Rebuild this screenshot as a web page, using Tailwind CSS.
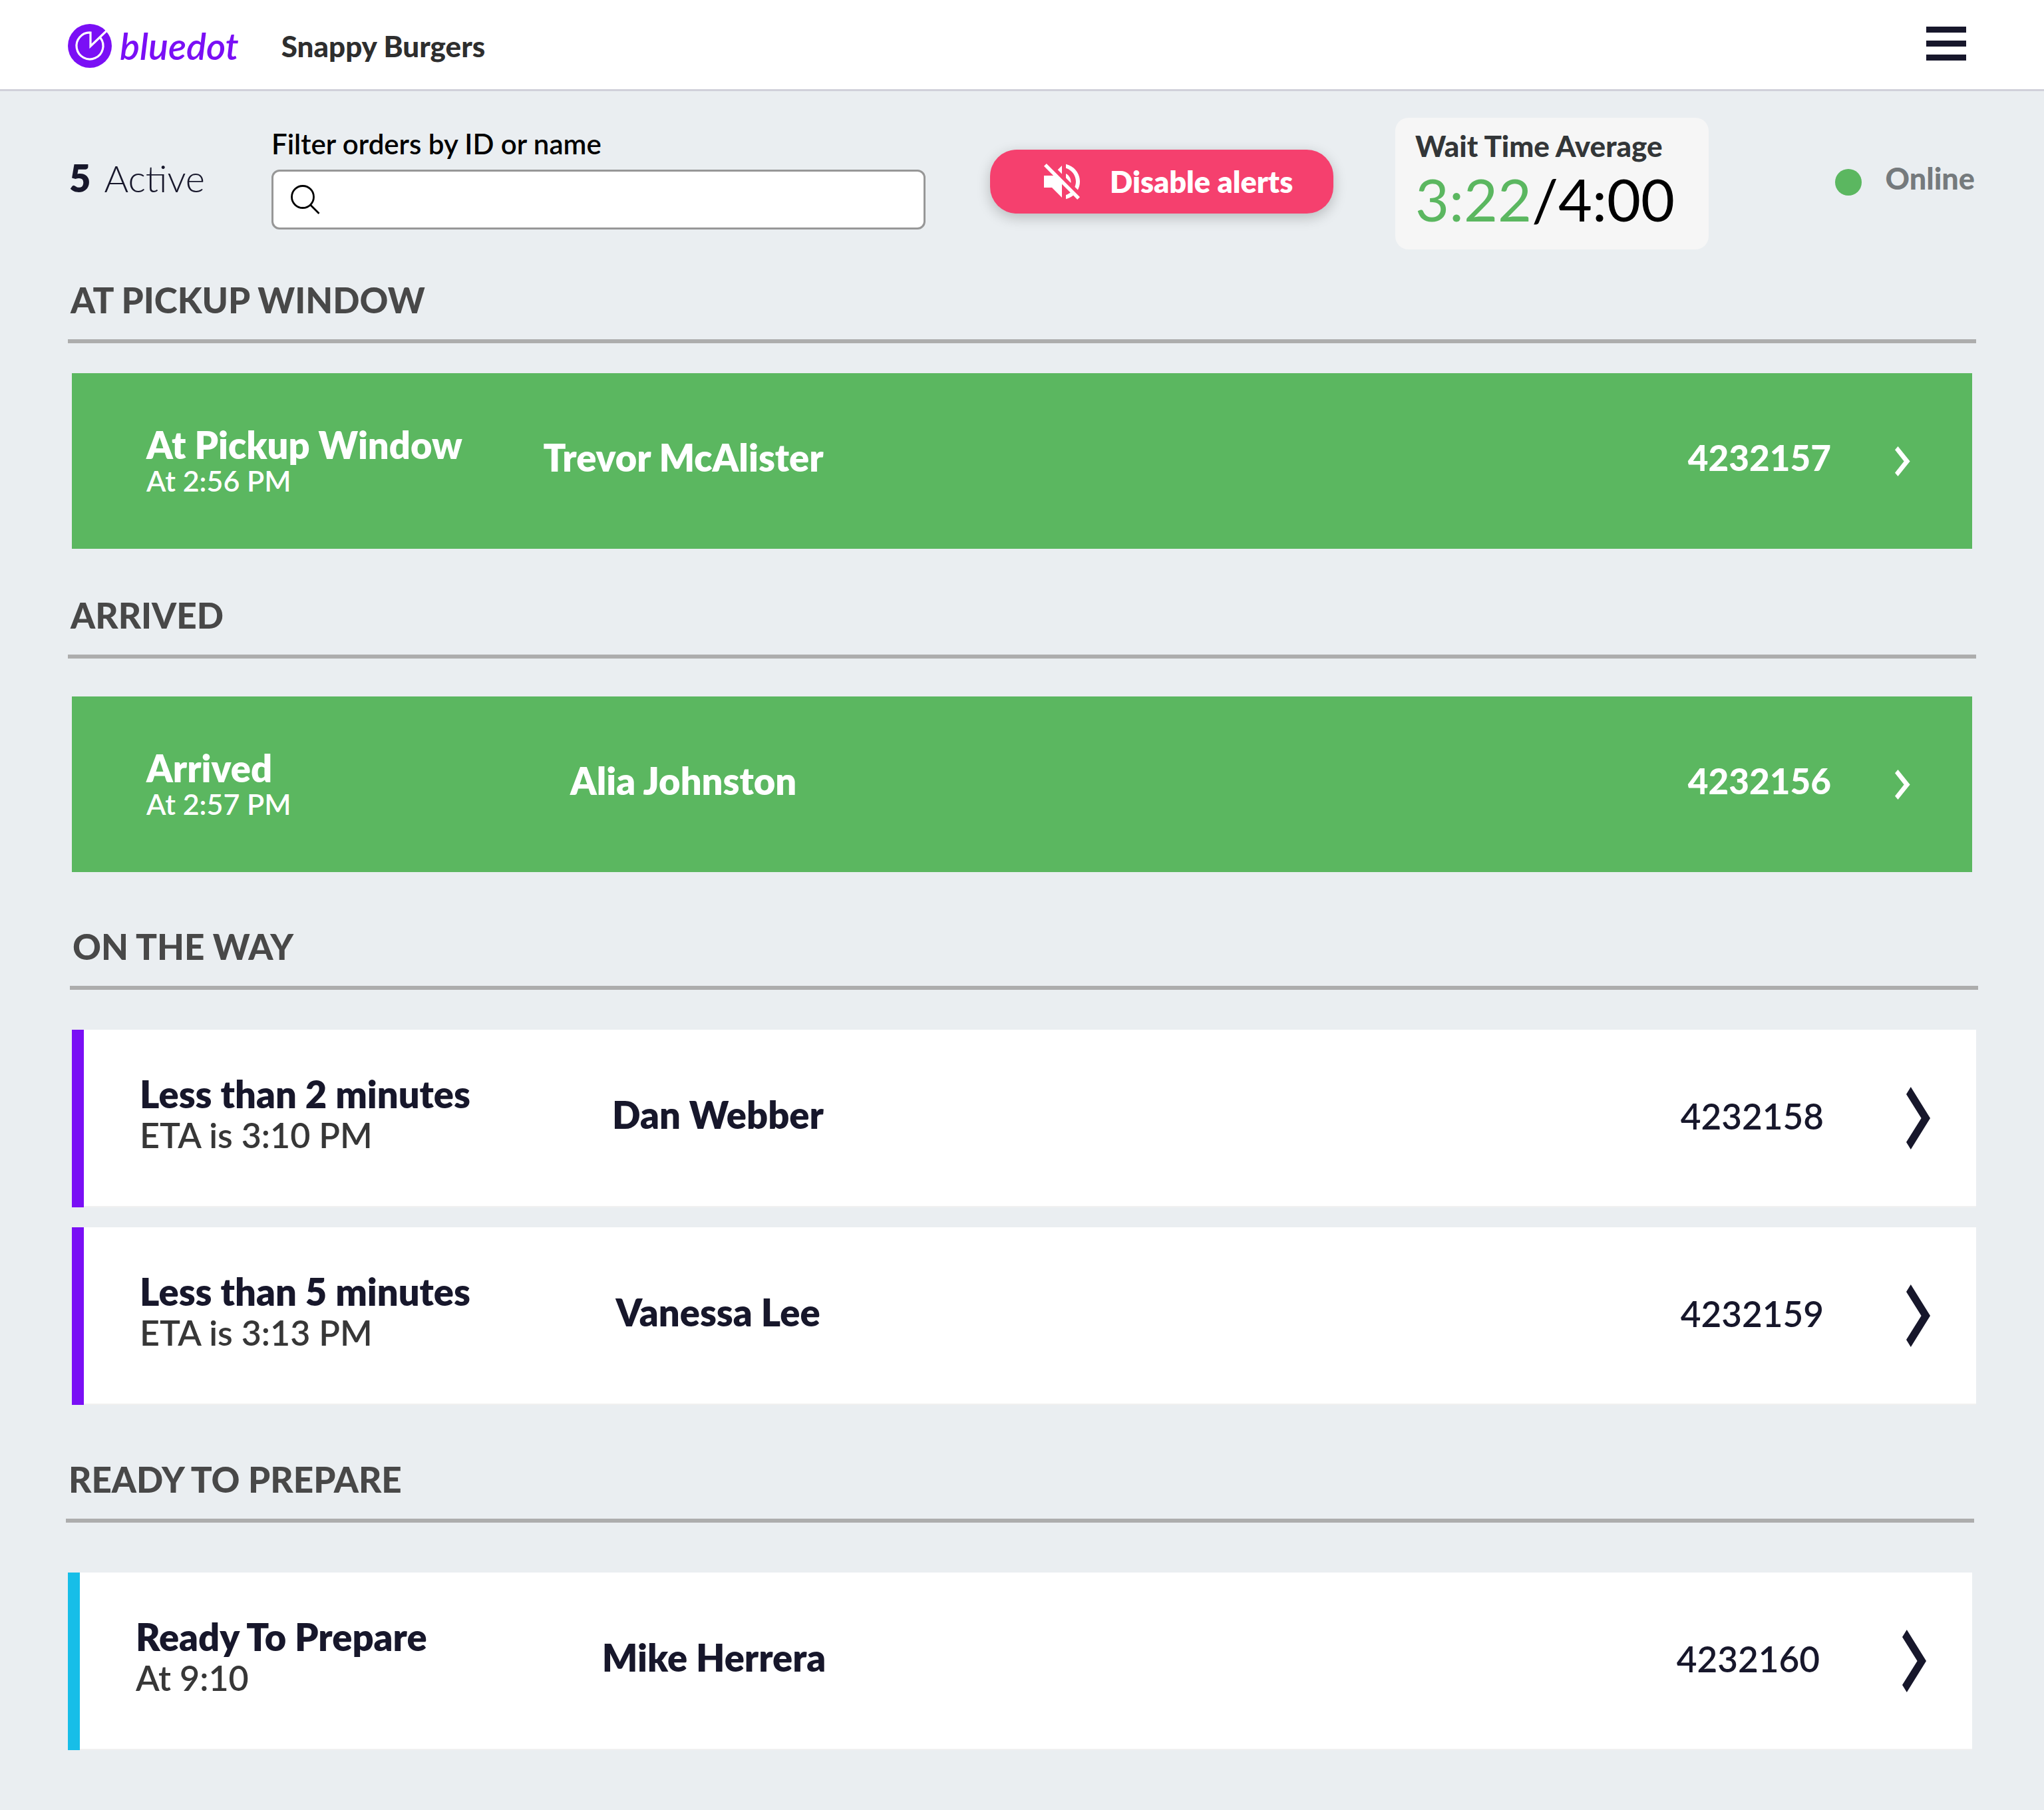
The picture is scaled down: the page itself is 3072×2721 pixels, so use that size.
<!DOCTYPE html>
<html lang="en">
<head>
<meta charset="utf-8">
<meta name="viewport" content="width=device-width, initial-scale=1">
<title>Snappy Burgers – Orders</title>
<script src="https://cdn.jsdelivr.net/npm/@tailwindcss/browser@4"></script>
</head>
<body class="min-h-screen bg-[#eaeef1] font-[Lato,sans-serif] text-[#17172b]">

<!-- Shared icons -->
<svg class="hidden" aria-hidden="true">
  <symbol id="chevron-small" viewBox="0 0 23 45"><path fill="currentColor" d="M4.5 0 0 5.3 13.6 22.5 0 39.7 4.5 45 22.6 22.5z"/></symbol>
  <symbol id="chevron-large" viewBox="0 0 36 94"><path fill="currentColor" d="M6.8 0 0 11 22.6 47 0 83 6.8 94 36 47z"/></symbol>
</svg>

<header class="flex h-[137px] items-center border-b-3 border-[#d0d0da] bg-white pt-1 pr-[117px] pl-[102px]">
  <a href="#" class="flex items-center gap-3 text-[#7a0ff5]">
    <svg class="size-[66px]" viewBox="0 0 66 66" fill="none" aria-hidden="true">
      <circle cx="33" cy="33" r="33" fill="#7a0ff5"/>
      <path d="M49 21A20 20 0 1 1 34 13V33.500L58.500 10" stroke="#fff" stroke-width="3.200"/>
    </svg>
    <span class="text-[56px] leading-[64px] font-semibold italic">bluedot</span>
  </a>
  <h1 class="ml-16 text-[44px] leading-[52px] font-black text-[#2e2e2e]">Snappy Burgers</h1>
  <button type="button" aria-label="Menu" class="mb-2 ml-auto flex w-[60px] flex-col gap-3">
    <span class="h-[9px] bg-[#17172b]"></span>
    <span class="h-[9px] bg-[#17172b]"></span>
    <span class="h-[9px] bg-[#17172b]"></span>
  </button>
</header>

<main class="pb-[90px]">
  <div class="flex items-center px-[104px] pt-10">
    <p class="w-[304px] shrink-0 pb-4 text-[56px] leading-[64px] font-light"><span class="mr-5 font-extrabold">5</span>Active</p>

    <div class="flex min-w-0 flex-1 flex-col gap-[15px] pb-4">
      <label for="filter" class="text-[42px] leading-[48px] font-semibold text-black">Filter orders by ID or name</label>
      <div class="flex h-[90px] items-center gap-6 rounded-[12px] border-3 border-[#979797] bg-white px-[26px]">
        <svg class="size-[44px] shrink-0" viewBox="0 0 44 44" fill="none" stroke="#000" stroke-width="2.800" aria-hidden="true">
          <circle cx="18" cy="18" r="16.500"/>
          <path d="M30 30.500 42.500 43"/>
        </svg>
        <input id="filter" type="text" class="h-full min-w-0 flex-1 bg-transparent text-[42px] text-black outline-none">
      </div>
    </div>

    <button type="button" class="mb-1.5 ml-[97px] flex h-24 w-[516px] shrink-0 items-center gap-9 rounded-[40px] bg-[#f5406e] pl-[72px] text-[45px] leading-[52px] font-extrabold text-white shadow-[0_6px_20px_rgba(0,0,0,0.22)]">
      <svg class="size-[72px]" viewBox="0 0 24 24" fill="currentColor" aria-hidden="true"><path d="M16.500 12c0-1.770-1.020-3.290-2.500-4.030v2.210l2.450 2.450c.030-.200.050-.410.050-.630zm2.500 0c0 .940-.200 1.820-.540 2.640l1.510 1.510C20.630 14.910 21 13.500 21 12c0-4.280-2.990-7.860-7-8.770v2.060c2.890.860 5 3.540 5 6.710zM4.270 3L3 4.270 7.730 9H3v6h4l5 5v-6.730l4.250 4.250c-.670.520-1.420.930-2.250 1.180v2.060c1.380-.310 2.630-.950 3.690-1.810L19.730 21 21 19.730l-9-9L4.270 3zM12 4L9.910 6.090 12 8.180V4z"/></svg>
      Disable alerts
    </button>

    <div class="ml-[93px] flex h-[198px] w-[471px] shrink-0 flex-col gap-2 rounded-[20px] bg-[#f6f6f6] pt-[18px] pl-[30px]">
      <h2 class="text-[44px] leading-[48px] font-black text-[#333638]">Wait Time Average</h2>
      <p class="text-[88px] leading-[96px] text-black"><span class="text-[#5bb760]">3:22</span>/4:00</p>
    </div>

    <div class="flex w-[400px] shrink-0 items-end justify-end gap-9 pb-4">
      <span class="size-10 rounded-full bg-[#5bb760]"></span>
      <span class="text-[45px] leading-[52px] font-black text-[#757a7d]">Online</span>
    </div>
  </div>

  <section class="mx-[102px] mt-11">
    <h2 class="border-b-6 border-[#adadad] pb-[27px] pl-1 text-[53px] leading-[64px] font-black text-[#484848]">AT PICKUP WINDOW</h2>
    <a href="#" class="mx-1.5 mt-[45px] flex h-[264px] items-center bg-[#5bb760] pr-[93px] pl-28 text-white">
      <div class="w-[500px]">
        <h3 class="text-[56px] leading-[60px] font-extrabold">At Pickup Window</h3>
        <p class="text-[43px] leading-[48px] font-semibold">At 2:56 PM</p>
      </div>
      <p class="w-[614px] pb-2.5 text-center text-[56px] leading-[60px] font-extrabold">Trevor McAlister</p>
      <p class="ml-auto pb-2.5 text-[53px] leading-[60px] font-black">4232157</p>
      <svg class="ml-24 h-[45px] w-[23px]" aria-hidden="true"><use href="#chevron-small"/></svg>
    </a>
  </section>

  <section class="mx-[102px] mt-[68px]">
    <h2 class="border-b-6 border-[#adadad] pb-[27px] pl-1 text-[53px] leading-[64px] font-black text-[#484848]">ARRIVED</h2>
    <a href="#" class="mx-1.5 mt-[57px] flex h-[264px] items-center bg-[#5bb760] pr-[93px] pl-28 text-white">
      <div class="w-[500px]">
        <h3 class="text-[56px] leading-[60px] font-extrabold">Arrived</h3>
        <p class="text-[43px] leading-[48px] font-semibold">At 2:57 PM</p>
      </div>
      <p class="w-[614px] pb-2.5 text-center text-[56px] leading-[60px] font-extrabold">Alia Johnston</p>
      <p class="ml-auto pb-2.5 text-[53px] leading-[60px] font-black">4232156</p>
      <svg class="ml-24 h-[45px] w-[23px]" aria-hidden="true"><use href="#chevron-small"/></svg>
    </a>
  </section>

  <section class="mt-20 mr-[99px] ml-[105px]">
    <h2 class="border-b-6 border-[#adadad] pb-[27px] pl-1 text-[53px] leading-[64px] font-black text-[#484848]">ON THE WAY</h2>
    <ul class="mx-[3px] mt-[60px] flex flex-col gap-[30px]">
      <li class="border-l-18 border-[#7a0ff5]">
        <a href="#" class="flex h-[267px] items-center border-b-2 border-[#f0f0f0] bg-white pr-[69px] pl-[84px]">
          <div class="w-[568px] pb-2.5">
            <h3 class="text-[56px] leading-[60px] font-extrabold">Less than 2 minutes</h3>
            <p class="text-[52px] leading-[62px] font-semibold text-[#373737]">ETA is 3:10 PM</p>
          </div>
          <p class="w-[602px] pb-2.5 text-center text-[56px] leading-[60px] font-extrabold">Dan Webber</p>
          <p class="ml-auto pb-1.5 text-[53px] leading-[60px] font-semibold">4232158</p>
          <svg class="ml-[124px] h-[94px] w-9" aria-hidden="true"><use href="#chevron-large"/></svg>
        </a>
      </li>
      <li class="border-l-18 border-[#7a0ff5]">
        <a href="#" class="flex h-[267px] items-center border-b-2 border-[#f0f0f0] bg-white pr-[69px] pl-[84px]">
          <div class="w-[568px] pb-2.5">
            <h3 class="text-[56px] leading-[60px] font-extrabold">Less than 5 minutes</h3>
            <p class="text-[52px] leading-[62px] font-semibold text-[#373737]">ETA is 3:13 PM</p>
          </div>
          <p class="w-[602px] pb-2.5 text-center text-[56px] leading-[60px] font-extrabold">Vanessa Lee</p>
          <p class="ml-auto pb-1.5 text-[53px] leading-[60px] font-semibold">4232159</p>
          <svg class="ml-[124px] h-[94px] w-9" aria-hidden="true"><use href="#chevron-large"/></svg>
        </a>
      </li>
    </ul>
  </section>

  <section class="mt-20 mr-[105px] ml-[99px]">
    <h2 class="border-b-6 border-[#adadad] pb-[27px] pl-1 text-[53px] leading-[64px] font-black text-[#484848]">READY TO PREPARE</h2>
    <ul class="mx-[3px] mt-[75px]">
      <li class="border-l-18 border-[#17bee8]">
        <a href="#" class="flex h-[267px] items-center border-b-2 border-[#f0f0f0] bg-white pr-[69px] pl-[84px]">
          <div class="w-[568px] pb-2.5">
            <h3 class="text-[56px] leading-[60px] font-extrabold">Ready To Prepare</h3>
            <p class="text-[52px] leading-[62px] font-semibold text-[#373737]">At 9:10</p>
          </div>
          <p class="w-[602px] pb-2.5 text-center text-[56px] leading-[60px] font-extrabold">Mike Herrera</p>
          <p class="ml-auto pb-1.5 text-[53px] leading-[60px] font-semibold">4232160</p>
          <svg class="ml-[124px] h-[94px] w-9" aria-hidden="true"><use href="#chevron-large"/></svg>
        </a>
      </li>
    </ul>
  </section>
</main>

</body>
</html>
